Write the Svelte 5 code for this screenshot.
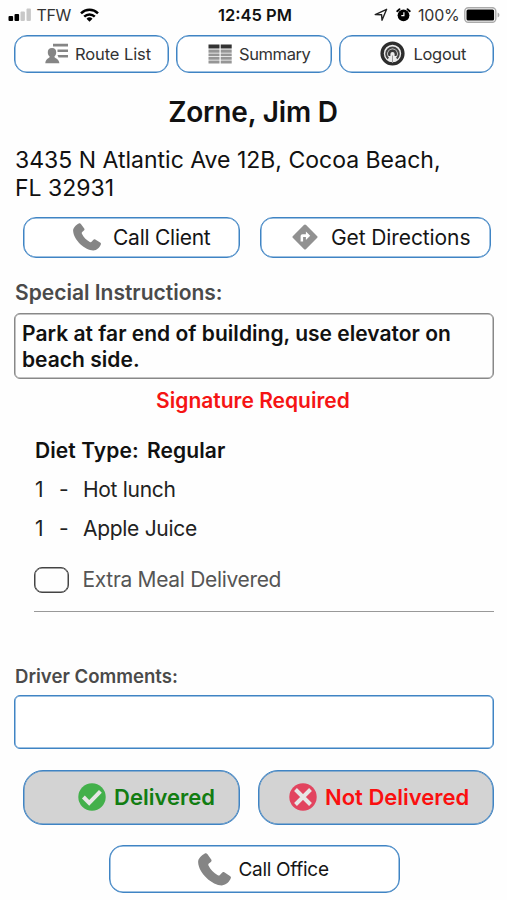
<script>
  const client = {
    name: 'Zorne, Jim D',
    address: '3435 N Atlantic Ave 12B, Cocoa Beach, FL 32931',
    instructions: 'Park at far end of building, use elevator on beach side.',
    diet: 'Regular'
  }

  const items = [
    { qty: 1, name: 'Hot lunch' },
    { qty: 1, name: 'Apple Juice' }
  ]

  let extraMeal = $state(false)
  let comments = $state('')
</script>

{#snippet phone(size)}
  <svg class="icon" width={size} height={size} viewBox="0 0 28 28">
    <path
      fill="#858585"
      d="M5.800.4c.8-.5 1.500-.3 2.100.5l3.300 4.600c.5.8.4 1.500-.3 2.100L9.200 9c-.5.5-.6 1.100-.3 1.700 1.700 3.600 4.300 6.200 7.900 8.200.7.4 1.300.3 1.800-.2l1.800-2c.5-.6 1.200-.7 1.900-.3l4.800 3.100c.9.6 1.100 1.300.6 2.200-1.100 2.500-3.600 5.600-7.500 5.800C12.500 27.500.4 17.400.1 7.600.1 4.500 3.200 1.900 5.800.4z"
    />
  </svg>
{/snippet}

<div class="screen">
  <header class="status">
    <div class="status__left">
      <svg width="23" height="14" viewBox="0 0 23 14">
        <rect x="0.500" y="8" width="4.600" height="5" rx="1" fill="#000" />
        <rect x="6.500" y="6" width="4.600" height="7" rx="1" fill="#000" />
        <rect x="12.500" y="3.500" width="4.400" height="9.500" rx="1" fill="#c8c8c8" />
        <rect x="18.500" y="0.500" width="4.400" height="12.500" rx="1" fill="#c8c8c8" />
      </svg>
      <span class="carrier">TFW</span>
      <svg width="19" height="14" viewBox="0 0 19 14" fill="none" stroke="#000" stroke-width="2.500">
        <path d="M1 5.300a12.200 12.200 0 0 1 17 0" />
        <path d="M4.200 8.700a7.600 7.600 0 0 1 10.600 0" />
        <path d="M9.500 13.800 6.500 10.800a4.300 4.300 0 0 1 6 0z" fill="#000" stroke="none" />
      </svg>
    </div>
    <span class="clock">12:45 PM</span>
    <div class="status__right">
      <svg width="14" height="14" viewBox="0 0 14 14" fill="none" stroke="#222" stroke-width="1.400" stroke-linejoin="round">
        <path d="M12.600 1.300 8 12.300 7.600 6.800 1.200 6.600z" />
      </svg>
      <svg class="alarm" width="15" height="14" viewBox="0 0 15 14">
        <circle cx="7.500" cy="7.300" r="5.900" fill="#000" />
        <path d="M1.200 3.200 3.500 1.200M13.800 3.200 11.500 1.200" stroke="#000" stroke-width="1.800" stroke-linecap="round" />
        <path d="M7.900 4.200v3.500H5.300" stroke="#fff" stroke-width="1.200" fill="none" />
      </svg>
      <span class="percent">100%</span>
      <svg width="36" height="16" viewBox="0 0 36 16">
        <rect x=".8" y=".8" width="31" height="14.400" rx="3.500" fill="#fff" stroke="#aaa" stroke-width="1.400" />
        <rect x="2.500" y="2.600" width="27.600" height="10.800" rx="1.500" fill="#000" />
        <path d="M33.600 5.500c2.400.8 2.400 4.200 0 5z" fill="#aaa" />
      </svg>
    </div>
  </header>

  <nav class="nav">
    <button class="btn btn--nav btn--route">
      <svg class="icon" width="24" height="21" viewBox="0 0 24 21" fill="#858585">
        <path d="M8 .8h15v2.600H8zM12.500 6.400H23V9H12.500zM12.500 12H23v2.600h-9.500z" />
        <path d="M7 5c2.900 0 4.400 2 4.200 4.700-.1 1.700-.9 3.200-1.900 4 .2 1.700 4.700 1.600 5.100 6.600H.3c.3-5 4.200-4.900 4.500-6.600-1.100-.8-1.900-2.300-2-4C2.600 7 4.100 5 7 5z" />
      </svg>
      Route List
    </button>
    <button class="btn btn--nav btn--summary">
      <svg class="icon" width="24" height="20" viewBox="0 0 24 20">
        <path fill="#333" d="M.5.500h11v4h-11zM12.700.500h11v4h-11z" />
        <path fill="#969696" d="M.5 5.600h11v3.200h-11zM12.700 5.600h11v3.200h-11zM.5 9.500h11v2.800h-11zM12.700 9.500h11v2.800h-11zM.5 13h11v2.800h-11zM12.700 13h11v2.800h-11zM.5 16.600h11v2.800h-11zM12.700 16.600h11v2.800h-11z" />
      </svg>
      Summary
    </button>
    <button class="btn btn--nav btn--logout">
      <svg class="icon" width="25" height="25" viewBox="0 0 25 25">
        <circle cx="12.500" cy="12.500" r="10.400" fill="#ececec" stroke="#2d2d2d" stroke-width="3.400" />
        <path d="M8.300 17.500a6.300 6.300 0 1 1 8.400 0" fill="none" stroke="#444" stroke-width="2" />
        <path d="M8.600 15a4.500 4.500 0 1 1 7.800 0z" fill="#3a3a3a" />
        <path d="M10.400 21v-8a2.100 2.100 0 0 1 4.200 0v8z" fill="#ececec" />
        <path d="M12.500 14.500V22" stroke="#999" stroke-width="1" />
      </svg>
      Logout
    </button>
  </nav>

  <h1 class="name">{client.name}</h1>
  <p class="address">{client.address}</p>

  <div class="actions">
    <button class="btn btn--client">
      {@render phone(28)}
      Call Client
    </button>
    <button class="btn btn--directions">
      <svg class="icon" width="26" height="26" viewBox="0 0 26 26">
        <path fill="#919191" d="M11.900 1a1.500 1.500 0 0 1 2.200 0L25 11.900a1.500 1.500 0 0 1 0 2.200L14.100 25a1.500 1.500 0 0 1-2.200 0L1 14.100a1.500 1.500 0 0 1 0-2.200z" />
        <path fill="#fff" d="M8.600 17.400v-5.200c0-1.100.8-1.900 1.900-1.900h3.400V7.400l4.300 4.300-4.300 4.200v-3h-2.800v4.500z" />
      </svg>
      Get Directions
    </button>
  </div>

  <h2 class="label">Special Instructions:</h2>
  <div class="instructions">{client.instructions}</div>
  <p class="signature">Signature Required</p>

  <section class="meal">
    <p class="diet">Diet Type: <span>{client.diet}</span></p>
    {#each items as item}
      <div class="item">
        <span>{item.qty}</span>
        <span>-</span>
        <span class="item__name">{item.name}</span>
      </div>
    {/each}
    <label class="extra">
      <input type="checkbox" bind:checked={extraMeal} />
      <span>Extra Meal Delivered</span>
    </label>
  </section>

  <h2 class="label label--small">Driver Comments:</h2>
  <textarea class="comments" bind:value={comments}></textarea>

  <div class="results">
    <button class="btn btn--delivered">
      <svg class="icon" width="28" height="28" viewBox="0 0 28 28">
        <circle cx="14" cy="14" r="13.700" fill="#43b04b" />
        <path d="m5.400 14 5.800 5.800L22.400 8.400" fill="none" stroke="#e6e6e6" stroke-width="4" />
      </svg>
      Delivered
    </button>
    <button class="btn btn--missed">
      <svg class="icon" width="28" height="28" viewBox="0 0 28 28">
        <circle cx="14" cy="14" r="13.700" fill="#e2445f" />
        <path d="m6.500 6.500 15 15M21.500 6.500l-15 15" stroke="#e6e6e6" stroke-width="4" />
      </svg>
      Not Delivered
    </button>
  </div>

  <button class="btn btn--office">
    {@render phone(33)}
    Call Office
  </button>
</div>

<style>
  :global(body) {
    margin: 0;
    background: #fff;
  }

  .screen {
    --blue: #3f84c4;
    box-sizing: border-box;
    display: flex;
    flex-direction: column;
    width: 507px;
    height: 900px;
    padding: 0 13px 0 14px;
    overflow: hidden;
    background: #fefefe;
    color: #111;
    font-family: Inter, 'Liberation Sans', sans-serif;
  }

  h1,
  h2,
  p {
    margin: 0;
  }

  svg {
    display: block;
    flex: none;
  }

  /* Status bar */
  .status {
    display: grid;
    grid-template-columns: 1fr auto 1fr;
    align-items: center;
    height: 30px;
    margin: 0 -6px;
    font-size: 16px;
    line-height: 30px;
  }

  .status__left,
  .status__right {
    display: flex;
    align-items: center;
  }

  .status__left {
    gap: 5.500px;
  }

  .status__right {
    justify-content: flex-end;
  }

  .carrier {
    width: 38px;
    color: #333;
    letter-spacing: -0.4px;
  }

  .clock {
    padding-left: 2px;
    font-size: 16.500px;
    font-weight: 600;
  }

  .alarm {
    margin: 0 7px 0 8px;
  }

  .percent {
    width: 46px;
    color: #333;
    letter-spacing: -0.2px;
  }

  /* Buttons */
  .btn {
    display: flex;
    align-items: center;
    box-sizing: border-box;
    padding: 0;
    border: 1px solid var(--blue);
    border-radius: 13px;
    box-shadow: inset 0 0 0 0.5px var(--blue);
    background: #fff;
    color: #151515;
    font-family: inherit;
    font-size: 21px;
    white-space: nowrap;
    cursor: pointer;
  }

  .nav {
    display: grid;
    grid-template-columns: 155px 156px 155px;
    justify-content: space-between;
    height: 38px;
    margin-top: 4.500px;
  }

  .btn--nav {
    font-size: 16.500px;
    letter-spacing: -0.1px;
    color: #333;
  }

  .btn--route {
    gap: 6px;
    padding-left: 30px;
  }

  .btn--summary {
    gap: 7.500px;
    padding-left: 30.500px;
    letter-spacing: -0.4px;
  }

  .btn--logout {
    gap: 8.500px;
    padding-left: 40px;
    letter-spacing: -0.3px;
  }

  /* Client */
  .name {
    margin: 19.500px 2px 0 0;
    font-size: 28px;
    font-weight: 600;
    line-height: 40px;
    letter-spacing: -0.18px;
    text-align: center;
    color: #111;
  }

  .address {
    width: 440px;
    margin: 14px 0 0 1px;
    font-size: 23px;
    line-height: 28px;
  }

  .actions {
    display: flex;
    justify-content: space-between;
    height: 41px;
    margin: 14.500px 3px 0 9px;
  }

  .btn--client {
    width: 217px;
    gap: 12px;
    padding-left: 49px;
    letter-spacing: -0.25px;
  }

  .btn--directions {
    width: 231px;
    gap: 13px;
    padding-left: 31px;
    letter-spacing: -0.1px;
  }

  .label {
    margin: 20px 0 0 1px;
    font-size: 21px;
    font-weight: 600;
    line-height: 30px;
    color: #4a4a4a;
  }

  .instructions {
    box-sizing: border-box;
    height: 66px;
    margin-top: 5.500px;
    padding: 7px 30px 0 7px;
    border: 1px solid #888;
    border-radius: 6px;
    box-shadow: inset 0 0 0 0.5px #888;
    font-size: 21px;
    font-weight: 600;
    line-height: 25.500px;
    letter-spacing: 0.02px;
  }

  .signature {
    margin: 6.500px 2px 0 0;
    font-size: 21px;
    font-weight: 600;
    line-height: 30px;
    text-align: center;
    color: #f51414;
  }

  /* Meal */
  .meal {
    margin-left: 20px;
    padding-bottom: 16.500px;
    border-bottom: 1px solid #999;
    font-size: 21px;
  }

  .diet {
    margin: 16px 0 0 1px;
    font-weight: 600;
    line-height: 38px;
    letter-spacing: 0.08px;
  }

  .diet span {
    margin-left: 3px;
  }

  .item {
    display: grid;
    grid-template-columns: 24px 24px auto;
    margin-left: 1px;
    line-height: 39px;
    color: #222;
  }

  .item__name {
    letter-spacing: -0.3px;
  }

  .extra {
    display: flex;
    align-items: center;
    gap: 13.500px;
    height: 30px;
    margin-top: 17px;
    color: #555;
    letter-spacing: -0.32px;
  }

  .extra input {
    appearance: none;
    box-sizing: border-box;
    width: 35px;
    height: 26px;
    margin: 0;
    border: 1px solid #444;
    border-radius: 8px;
    box-shadow: inset 0 0 0 0.5px #444;
  }

  .extra input:checked {
    background: #444;
  }

  /* Comments */
  .label--small {
    margin-top: 48.500px;
    font-size: 18.600px;
  }

  .comments {
    box-sizing: border-box;
    width: 480px;
    height: 54px;
    margin: 4px 0 0;
    padding: 8px;
    border: 1px solid var(--blue);
    border-radius: 6px;
    box-shadow: inset 0 0 0 0.5px var(--blue);
    font: inherit;
    resize: none;
    outline: none;
  }

  .results {
    display: flex;
    justify-content: space-between;
    height: 55px;
    margin: 21px 0 0 9px;
  }

  .btn--delivered,
  .btn--missed {
    border-radius: 20px;
    background: #d3d3d3;
    font-size: 22px;
    font-weight: 600;
  }

  .btn--delivered {
    width: 217px;
    gap: 8px;
    padding-left: 54px;
    color: #127d12;
  }

  .btn--missed {
    width: 236px;
    gap: 8px;
    padding-left: 30px;
    color: #fa1010;
  }

  .btn--office {
    width: 291px;
    height: 48px;
    margin: 20.500px 0 0 94.500px;
    gap: 8px;
    padding-left: 88px;
    border-radius: 14px;
    font-size: 19px;
    letter-spacing: -0.3px;
  }
</style>
